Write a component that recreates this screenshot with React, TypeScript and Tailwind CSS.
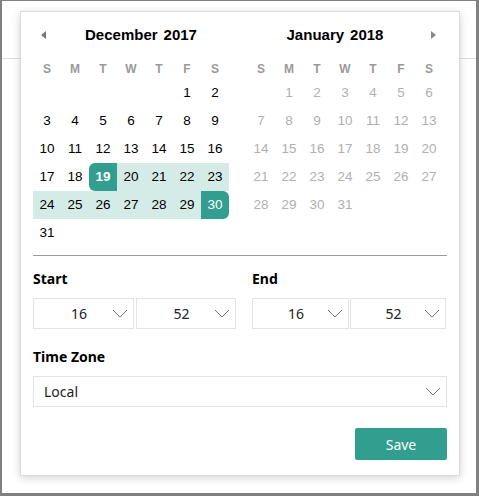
type Cell = number | null;

const DEC: Cell[][] = [
  [null, null, null, null, null, 1, 2],
  [3, 4, 5, 6, 7, 8, 9],
  [10, 11, 12, 13, 14, 15, 16],
  [17, 18, 19, 20, 21, 22, 23],
  [24, 25, 26, 27, 28, 29, 30],
  [31, null, null, null, null, null, null],
];

const JAN: Cell[][] = [
  [null, 1, 2, 3, 4, 5, 6],
  [7, 8, 9, 10, 11, 12, 13],
  [14, 15, 16, 17, 18, 19, 20],
  [21, 22, 23, 24, 25, 26, 27],
  [28, 29, 30, 31, null, null, null],
];

const DAYS = ['S', 'M', 'T', 'W', 'T', 'F', 'S'];

function Month({ rows, current }: { rows: Cell[][]; current: boolean }) {
  return (
    <div className="w-[196px]">
      <div className="grid grid-cols-7 h-[26px] items-end pb-[4px]">
        {DAYS.map((d, i) => (
          <div key={i} className="text-center text-[12px] font-bold text-[#9a9a9a] leading-none">
            {d}
          </div>
        ))}
      </div>
      {rows.map((row, r) => (
        <div key={r} className="grid grid-cols-7 h-[28px]">
          {row.map((n, i) => {
            let cls = 'flex items-center justify-center text-[13.5px] ';
            if (!current) cls += 'text-[#b0b0b0]';
            else if (n === 19) cls += 'bg-[#329e8f] text-white font-bold rounded-l-[6px]';
            else if (n === 30) cls += 'bg-[#329e8f] text-white rounded-r-[6px]';
            else if (n !== null && n > 19 && n < 30) cls += 'bg-[#d5ebe8] text-black';
            else cls += 'text-black';
            return (
              <div key={i} className={cls}>
                {n ?? ''}
              </div>
            );
          })}
        </div>
      ))}
    </div>
  );
}

function Chevron() {
  return (
    <svg width="16" height="9" viewBox="0 0 16 9" fill="none" className="mr-[5px]">
      <path d="M1 1l7 7 7-7" stroke="#777" strokeWidth="1" />
    </svg>
  );
}

function Select({ value, w, center = true }: { value: string; w: string; center?: boolean }) {
  return (
    <div className={`${w} h-[31px] border border-[#e3e3e3] flex items-center`}>
      <span
        className={
          center
            ? 'flex-1 text-center pl-[12px] text-[14px] text-[#222]'
            : 'flex-1 pl-[10px] text-[14px] text-[#222]'
        }
      >
        {value}
      </span>
      <Chevron />
    </div>
  );
}

export default function App() {
  return (
    <div className="relative w-[479px] h-[496px] bg-white border-[#808080] border-t-[1px] border-l-[2px] border-r-[3px] border-b-[3px] overflow-hidden [font-family:'Noto_Sans',sans-serif]">
      <div className="h-[58px] border-b border-[#dedede]" />

      <div className="absolute left-[18px] top-[10px] w-[440px] h-[465px] bg-white border border-[#dcdcdc] shadow-[0_2px_8px_rgba(0,0,0,0.18)] px-[12px] pt-[13px]">
        <div className="flex gap-[18px] [font-family:'Liberation_Sans',Arial,sans-serif]">
          <div>
            <div className="flex items-center h-[20px] mb-[8px]">
              <div className="w-[20px] flex justify-center">
                <div className="w-0 h-0 border-y-[4.5px] border-y-transparent border-r-[5px] border-r-[#777]" />
              </div>
              <div className="flex-1 text-center text-[15px] font-bold text-black">
                December<span className="ml-[6px]">2017</span>
              </div>
            </div>
            <Month rows={DEC} current />
          </div>
          <div>
            <div className="flex items-center h-[20px] mb-[8px]">
              <div className="flex-1 text-center text-[15px] font-bold text-black">
                January<span className="ml-[6px]">2018</span>
              </div>
              <div className="w-[20px] flex justify-center">
                <div className="w-0 h-0 border-y-[4.5px] border-y-transparent border-l-[5px] border-l-[#888]" />
              </div>
            </div>
            <Month rows={JAN} current={false} />
          </div>
        </div>

        <div className="mt-[8px] border-t border-[#9a9a9a]" />

        <div className="flex mt-[13px]">
          <div className="w-[219px]">
            <div className="text-[14px] font-bold text-black leading-[20px] mb-[9px]">Start</div>
            <div className="flex gap-[2px]">
              <Select value="16" w="w-[101px]" />
              <Select value="52" w="w-[100px]" />
            </div>
          </div>
          <div>
            <div className="text-[14px] font-bold text-black leading-[20px] mb-[9px]">End</div>
            <div className="flex gap-[1px]">
              <Select value="16" w="w-[97px]" />
              <Select value="52" w="w-[96px]" />
            </div>
          </div>
        </div>

        <div className="text-[14px] font-bold text-black leading-[20px] mt-[18px] mb-[9px]">Time Zone</div>
        <Select value="Local" w="w-full" center={false} />

        <div className="flex justify-end mt-[21px]">
          <button className="w-[92px] h-[32px] rounded-[2px] bg-[#329e8f] text-white text-[14px]">
            Save
          </button>
        </div>
      </div>
    </div>
  );
}
